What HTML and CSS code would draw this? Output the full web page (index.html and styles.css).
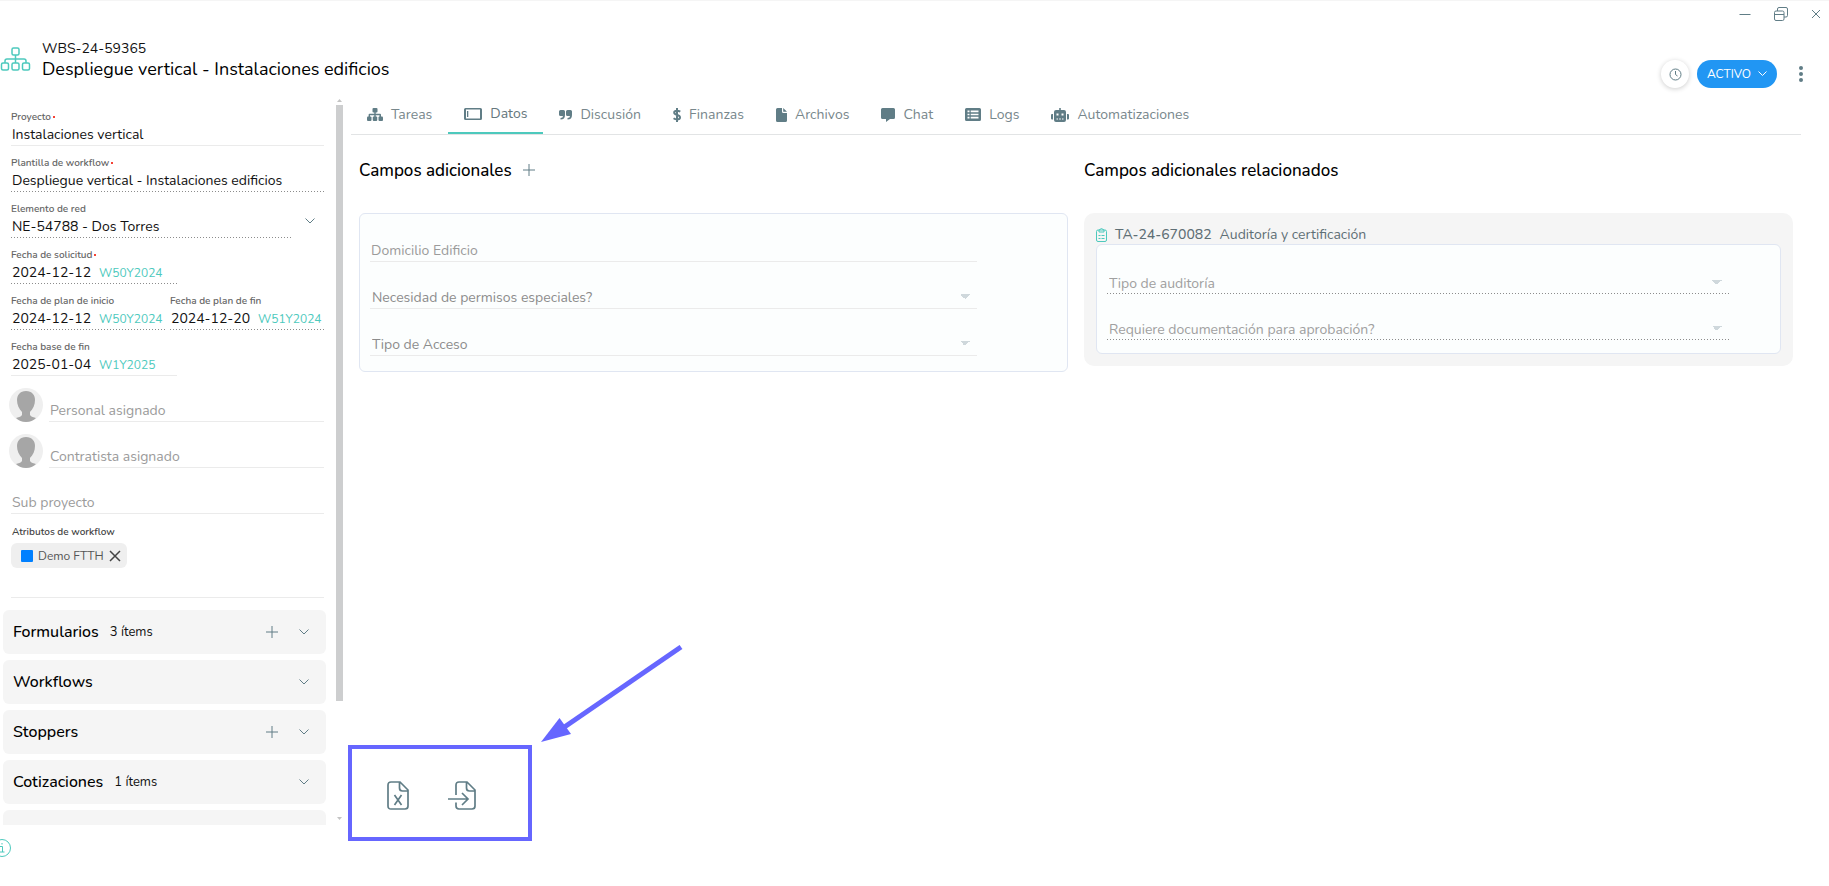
FILE: index.html
```
<!DOCTYPE html>
<html lang="es">
<head>
  <meta charset="UTF-8" />
  <meta name="viewport" content="width=device-width, initial-scale=1.0"/>
  <title>WBS-24-59365</title>
  <link rel="stylesheet" href="styles.css">
</head>
<body>

  <div class="window-bar">
    <button class="icon-btn" aria-label="Minimizar">
      <svg width="12" height="14" viewBox="0 0 12 14"><path d="M0.5 7.5h11"/></svg>
    </button>
    <button class="icon-btn" aria-label="Restaurar">
      <svg width="14" height="14" viewBox="0 0 14 14"><rect x="0.5" y="4" width="9.5" height="9.5" rx="1.5"/><path d="M0.5 7.500h9.500M3.500 4V2Q3.500.5 5 .5h7Q13.500.5 13.500 2v6.500Q13.500 10 12 10h-2"/></svg>
    </button>
    <button class="icon-btn" aria-label="Cerrar">
      <svg width="10" height="14" viewBox="0 0 10 14"><path d="M1 3l8 8M9 3l-8 8"/></svg>
    </button>
  </div>

  <header class="header">
    <svg class="header-icon" width="31" height="24" viewBox="0 0 31 24">
      <rect x="12" y="1" width="7" height="7" rx="1.500"/>
      <rect x="1.500" y="16" width="7" height="7" rx="1.500"/>
      <rect x="12" y="16" width="7" height="7" rx="1.500"/>
      <rect x="22.500" y="16" width="7" height="7" rx="1.500"/>
      <path d="M15.500 8v8M5 16v-2q0-2 2-2h17q2 0 2 2v2"/>
    </svg>
    <div class="header-text">
      <div class="code">WBS-24-59365</div>
      <h1>Despliegue vertical - Instalaciones edificios</h1>
    </div>
    <div class="header-actions">
      <button class="clock-btn" aria-label="Historial">
        <svg width="13" height="13" viewBox="0 0 13 13"><circle cx="6.500" cy="6.500" r="5.500"/><path d="M6.500 3v3.500l2 1.500"/></svg>
      </button>
      <button class="status-btn">ACTIVO
        <svg width="9" height="6" viewBox="0 0 9 6"><path d="M0.500 .5l4 4 4-4"/></svg>
      </button>
      <button class="dots-btn" aria-label="Más opciones">
        <svg width="4" height="16" viewBox="0 0 4 16"><circle cx="2" cy="2" r="2"/><circle cx="2" cy="8" r="2"/><circle cx="2" cy="14" r="2"/></svg>
      </button>
    </div>
  </header>

  <div class="layout">

    <aside class="sidebar">
      <div class="sidebar-content">
        <div class="fields">
          <div class="field">
            <label for="proyecto">Proyecto<i></i></label>
            <input id="proyecto" type="text" value="Instalaciones vertical">
          </div>
          <div class="field dotted">
            <label for="plantilla">Plantilla de workflow<i></i></label>
            <input id="plantilla" type="text" value="Despliegue vertical - Instalaciones edificios" readonly>
          </div>
          <div class="field-row">
            <div class="field dotted grow">
              <label for="elemento">Elemento de red</label>
              <input id="elemento" type="text" value="NE-54788 - Dos Torres" readonly>
            </div>
            <button class="icon-btn expand" aria-label="Desplegar elemento de red">
              <svg width="10" height="6" viewBox="0 0 10 6"><path d="M0.500 .5l4.500 4.500 4.500-4.500"/></svg>
            </button>
          </div>
          <div class="field dotted short">
            <label for="solicitud">Fecha de solicitud<i></i></label>
            <div class="date"><input id="solicitud" type="text" value="2024-12-12" readonly><span>W50Y2024</span></div>
          </div>
          <div class="field-row dates">
            <div class="field dotted grow">
              <label for="inicio">Fecha de plan de inicio</label>
              <div class="date"><input id="inicio" type="text" value="2024-12-12" readonly><span>W50Y2024</span></div>
            </div>
            <div class="field dotted grow">
              <label for="fin">Fecha de plan de fin</label>
              <div class="date"><input id="fin" type="text" value="2024-12-20" readonly><span>W51Y2024</span></div>
            </div>
          </div>
          <div class="field short">
            <label for="base">Fecha base de fin</label>
            <div class="date"><input id="base" type="text" value="2025-01-04"><span>W1Y2025</span></div>
          </div>
          <div class="person">
            <svg class="avatar" width="34" height="34" viewBox="0 0 34 34"><circle class="avatar-bg" cx="17" cy="17" r="17"/><path d="M17 3c6 0 9 4 9 9 0 5-2 9-5 12v3c1 2 4 2 6 3q-4 4-10 4t-10-4c2-1 5-1 6-3v-3c-3-3-5-7-5-12 0-5 3-9 9-9z"/></svg>
            <input type="text" aria-label="Personal asignado" placeholder="Personal asignado">
          </div>
          <div class="person">
            <svg class="avatar" width="34" height="34" viewBox="0 0 34 34"><circle class="avatar-bg" cx="17" cy="17" r="17"/><path d="M17 3c6 0 9 4 9 9 0 5-2 9-5 12v3c1 2 4 2 6 3q-4 4-10 4t-10-4c2-1 5-1 6-3v-3c-3-3-5-7-5-12 0-5 3-9 9-9z"/></svg>
            <input type="text" aria-label="Contratista asignado" placeholder="Contratista asignado">
          </div>
          <div class="person">
            <input type="text" aria-label="Sub proyecto" placeholder="Sub proyecto">
          </div>
          <div class="attributes">
            <div class="attributes-title">Atributos de workflow</div>
            <div class="chip">
              <span class="chip-color"></span>Demo FTTH
              <button class="chip-close" aria-label="Quitar Demo FTTH">
                <svg width="12" height="12" viewBox="0 0 12 12"><path d="M1 1l10 10M11 1L1 11"/></svg>
              </button>
            </div>
          </div>
        </div>

        <section class="panel">
          <h2>Formularios</h2><span>3 ítems</span>
          <button class="icon-btn" aria-label="Agregar formulario"><svg width="12" height="12" viewBox="0 0 12 12"><path d="M6 0v12M0 6h12"/></svg></button>
          <button class="icon-btn" aria-label="Abrir formularios"><svg width="10" height="6" viewBox="0 0 10 6"><path d="M0.500 .5l4.500 4.500 4.500-4.500"/></svg></button>
        </section>
        <section class="panel">
          <h2>Workflows</h2>
          <button class="icon-btn" aria-label="Abrir workflows"><svg width="10" height="6" viewBox="0 0 10 6"><path d="M0.500 .5l4.500 4.500 4.500-4.500"/></svg></button>
        </section>
        <section class="panel">
          <h2>Stoppers</h2>
          <button class="icon-btn" aria-label="Agregar stopper"><svg width="12" height="12" viewBox="0 0 12 12"><path d="M6 0v12M0 6h12"/></svg></button>
          <button class="icon-btn" aria-label="Abrir stoppers"><svg width="10" height="6" viewBox="0 0 10 6"><path d="M0.500 .5l4.500 4.500 4.500-4.500"/></svg></button>
        </section>
        <section class="panel">
          <h2>Cotizaciones</h2><span>1 ítems</span>
          <button class="icon-btn" aria-label="Abrir cotizaciones"><svg width="10" height="6" viewBox="0 0 10 6"><path d="M0.500 .5l4.500 4.500 4.500-4.500"/></svg></button>
        </section>
        <section class="panel"></section>
      </div>
      <div class="scrollbar">
        <svg width="5" height="3" viewBox="0 0 5 3"><path d="M2.500 0L5 3H0z"/></svg>
        <div class="scrollbar-track"><div class="scrollbar-thumb"></div></div>
        <svg width="5" height="3" viewBox="0 0 5 3"><path d="M0 0h5L2.500 3z"/></svg>
      </div>
    </aside>

    <main class="main">
      <nav class="tabs">
        <a href="#tareas" class="tab">
          <svg width="16" height="13" viewBox="0 0 16 13"><rect x="5.500" y="0" width="5" height="4.500" rx="1"/><rect x="0" y="8.500" width="4.500" height="4.500" rx="1"/><rect x="5.750" y="8.500" width="4.500" height="4.500" rx="1"/><rect x="11.500" y="8.500" width="4.500" height="4.500" rx="1"/><path d="M7.300 4h1.400v1.800H13q1 0 1 1V9h-1.500V7.200H8.700V9H7.300V7.200H3V9H1.600V6.800q0-1 1-1h4.700z"/></svg>
          Tareas
        </a>
        <a href="#datos" class="tab active">
          <svg width="18" height="12" viewBox="0 0 18 12"><path fill-rule="evenodd" d="M1.500 0h15Q18 0 18 1.500v9Q18 12 16.500 12h-15Q0 12 0 10.500v-9Q0 0 1.500 0zM2 1.500v9h14v-9zM3 3h1.300v6H3z"/></svg>
          Datos
        </a>
        <a href="#discusion" class="tab">
          <svg width="13" height="10" viewBox="0 0 13 10"><path d="M1.500 0h3Q6 0 6 1.500V5Q6 9.500 1.500 9.500V8Q4 8 4 6H1.500Q0 6 0 4.500v-3Q0 0 1.500 0zM8.500 0h3Q13 0 13 1.500V5q0 4.500-4.500 4.500V8Q11 8 11 6H8.500Q7 6 7 4.500v-3Q7 0 8.500 0z"/></svg>
          Discusión
        </a>
        <a href="#finanzas" class="tab">
          <svg class="line" width="8" height="14" viewBox="0 0 8 14"><path d="M4 0v14M7.300 3.600Q5.800 2.700 4 2.700 1.200 2.700 1.200 4.500 1.200 6.200 4 6.900 7 7.600 7 9.400 7 11.300 4 11.300 2 11.300.5 10.200"/></svg>
          Finanzas
        </a>
        <a href="#archivos" class="tab">
          <svg width="11" height="14" viewBox="0 0 11 14"><path d="M1.500 0H6v3.500Q6 5 7.500 5H11v7.500Q11 14 9.500 14h-8Q0 14 0 12.500v-11Q0 0 1.500 0zM7.200 0L11 3.800H7.200z"/></svg>
          Archivos
        </a>
        <a href="#chat" class="tab">
          <svg width="14" height="14" viewBox="0 0 14 14"><path d="M1.500 0h11Q14 0 14 1.500v8q0 1.500-1.500 1.500H9l-4 3v-3H1.500Q0 11 0 9.500v-8Q0 0 1.500 0z"/></svg>
          Chat
        </a>
        <a href="#logs" class="tab">
          <svg width="16" height="13" viewBox="0 0 16 13"><path fill-rule="evenodd" d="M1.500 0h13Q16 0 16 1.500v10q0 1.500-1.500 1.500h-13Q0 13 0 11.500v-10Q0 0 1.500 0zM2.500 2.600v1.600h2V2.600zm3.200 0v1.600h7.800V2.600zM2.500 5.700v1.600h2V5.700zm3.200 0v1.600h7.800V5.700zM2.500 8.800v1.600h2V8.800zm3.200 0v1.600h7.800V8.800z"/></svg>
          Logs
        </a>
        <a href="#automatizaciones" class="tab">
          <svg width="18" height="14" viewBox="0 0 18 14"><path fill-rule="evenodd" d="M8.200 0h1.600v2H13q2 0 2 2v8q0 2-2 2H5q-2 0-2-2V4q0-2 2-2h3.200zM5.500 5.500v2h2v-2zm5 0v2h2v-2zM5.500 10.500v1h1.500v-1zm2.700 0v1h1.600v-1zm2.800 0v1h1.500v-1zM0 7q0-1 1-1h1v5.500H1q-1 0-1-1zM16 6h1q1 0 1 1v3.500q0 1-1 1h-1z"/></svg>
          Automatizaciones
        </a>
      </nav>

      <div class="columns">
        <section class="column">
          <h2>Campos adicionales
            <button class="icon-btn" aria-label="Agregar campo"><svg width="12" height="12" viewBox="0 0 12 12"><path d="M6 0v12M0 6h12"/></svg></button>
          </h2>
          <div class="card">
            <input type="text" aria-label="Domicilio Edificio" placeholder="Domicilio Edificio">
            <select aria-label="Necesidad de permisos especiales?"><option>Necesidad de permisos especiales?</option></select>
            <select aria-label="Tipo de Acceso"><option>Tipo de Acceso</option></select>
          </div>
        </section>

        <section class="column">
          <h2>Campos adicionales relacionados</h2>
          <div class="related">
            <div class="related-title">
              <svg width="11" height="14" viewBox="0 0 11 14"><rect x="0.500" y="2" width="10" height="11.500" rx="1.500"/><path d="M3 4V2l2.500-1.500L8 2v2zM2.500 7.500h2M5.500 7.500h3M2.500 10.500h2M5.500 10.500h3"/></svg>
              <b>TA-24-670082</b>
              <span>Auditoría y certificación</span>
            </div>
            <div class="card locked">
              <select aria-label="Tipo de auditoría"><option>Tipo de auditoría</option></select>
              <select aria-label="Requiere documentación para aprobación?"><option>Requiere documentación para aprobación?</option></select>
            </div>
          </div>
        </section>
      </div>

      <div class="export-area">
        <!-- flecha que señala los botones -->
        <svg class="arrow" width="142" height="98" viewBox="0 0 142 98"><path class="arrow-line" d="M140 2L22 83"/><path class="arrow-head" d="M0 97L18.500 73 30 89z"/></svg>
        <div class="export-box">
          <button class="icon-btn" aria-label="Exportar a Excel">
            <svg width="22" height="29" viewBox="0 0 22 29"><path d="M4 1h9l8 8v16q0 3-3 3H4q-3 0-3-3V4q0-3 3-3zM12.500 1v6q0 3 3 3H21M7.500 14l7 10M14.500 14l-7 10"/></svg>
          </button>
          <button class="icon-btn" aria-label="Importar">
            <svg width="28" height="29" viewBox="0 0 28 29"><path d="M8 14V4q0-3 3-3h8l8 8v16q0 3-3 3H11q-3 0-3-3v-3.500M18.500 1v6q0 3 3 3H27M0 18h20M14 12l6 6-6 6"/></svg>
          </button>
        </div>
      </div>
    </main>
  </div>

  <footer>
    <button class="info-btn" aria-label="Información">
      <svg width="20" height="20" viewBox="0 0 20 20"><circle cx="10" cy="10" r="8.500"/><path d="M8 8.500h2.500V14M7.500 14h5M10 5v1.500"/></svg>
    </button>
  </footer>

</body>
</html>
```
FILE: styles.css
```
:root {
  --teal: #4dc9bd;
  --slate: #607d86;
  --line: #ebebeb;
  --dots: repeating-linear-gradient(to right, #8c8c8c 0 1px, transparent 1px 3px) bottom left / 100% 1px no-repeat;
  --mark: #6666ff;
}

* {
  box-sizing: border-box;
}

body {
  margin: 0;
  min-height: 100vh;
  display: flex;
  flex-direction: column;
  overflow: hidden;
  font-family: Nunito, Lato, sans-serif;
  font-size: 14px;
  color: #111;
  background-color: #fff;
  border-top: 1px solid #f5f5f5;
}

button, input, select {
  font: inherit;
  color: inherit;
  border: none;
  background: none;
  padding: 0;
  margin: 0;
  outline: none;
}

button {
  cursor: pointer;
}

svg {
  display: block;
  flex: none;
  fill: none;
  stroke: var(--slate);
}

h1, h2 {
  margin: 0;
  font-weight: 400;
}

.window-bar {
  display: flex;
  justify-content: flex-end;
  gap: 23px;
  height: 39px;
  padding: 6px 8px 0 0;
}

.window-bar .icon-btn {
  height: 14px;
}

.header {
  display: flex;
  height: 57px;
  padding-right: 26px;
}

.header-icon {
  margin-top: 7px;
  stroke: var(--teal);
  stroke-width: 1.5;
}

.header-text {
  margin-left: 11px;
}

.code {
  font-size: 14px;
  line-height: 18px;
}

.header h1 {
  font-size: 18px;
  line-height: 22px;
  color: #000;
}

.header-actions {
  display: flex;
  align-items: center;
  align-self: flex-start;
  margin: 20px 0 0 auto;
}

.clock-btn {
  display: grid;
  place-items: center;
  width: 28px;
  height: 28px;
  margin-right: 8px;
  border-radius: 50%;
  background-color: #fff;
  box-shadow: 0 1px 5px rgba(0, 0, 0, 0.2);
}

.status-btn {
  display: flex;
  align-items: center;
  justify-content: center;
  gap: 7px;
  width: 80px;
  height: 28px;
  margin-right: 22px;
  border-radius: 14px;
  font-size: 12px;
  color: #fff;
  background-color: #2196f3;
}

.status-btn svg {
  stroke: #fff;
}

.dots-btn svg {
  fill: var(--slate);
  stroke: none;
}

.layout {
  display: flex;
  height: 728px;
}

.sidebar {
  display: flex;
  flex: none;
  width: 351px;
}

.sidebar-content {
  width: 326px;
  padding-left: 3px;
  overflow: hidden;
}

.fields {
  margin: 3px 2px 12px 8px;
  border-bottom: 1px solid var(--line);
}

.field {
  height: 46px;
  padding-top: 10px;
  border-bottom: 1px solid var(--line);
}

.field.dotted {
  border-bottom: none;
  background: var(--dots);
}

.field label {
  display: flex;
  align-items: center;
  gap: 2px;
  font-size: 10px;
  font-weight: 600;
  line-height: 14px;
  color: #666;
}

.field label i {
  width: 2px;
  height: 2px;
  background-color: #f44336;
}

.field input {
  display: block;
  width: 100%;
  height: 21px;
  padding-left: 1px;
}

.field-row {
  display: flex;
}

.dates {
  gap: 5px;
}

.grow {
  flex: 1;
}

.short {
  width: 166px;
}

.date {
  display: flex;
  align-items: center;
}

.field .date input {
  flex: none;
  width: 88px;
}

.date span {
  font-size: 12px;
  color: var(--teal);
}

.expand {
  padding: 12px 9px 0 12px;
}

.person {
  display: flex;
  align-items: flex-end;
  height: 46px;
}

.avatar {
  margin: 0 6px 0 -2px;
  fill: #a6a6a6;
  stroke: none;
}

.avatar-bg {
  fill: #efefef;
}

.person input {
  flex: 1;
  height: 24px;
  padding: 2px 0 0 1px;
  border-bottom: 1px solid var(--line);
}

::placeholder {
  color: #9b9b9b;
  opacity: 1;
}

.attributes {
  height: 83px;
  padding-top: 11px;
}

.attributes-title {
  padding-left: 1px;
  font-size: 10px;
  font-weight: 600;
  line-height: 14px;
  color: #444;
}

.chip {
  display: inline-flex;
  align-items: center;
  gap: 5px;
  height: 25px;
  margin-top: 4px;
  padding: 0 6px 0 10px;
  border-radius: 6px;
  font-size: 12px;
  color: #555;
  background-color: #efefef;
}

.chip-color {
  width: 12px;
  height: 12px;
  border-radius: 1px;
  background-color: #0080ff;
}

.chip-close svg {
  stroke: #444;
  stroke-width: 1.5;
}

.panel {
  display: flex;
  align-items: center;
  height: 44px;
  margin-bottom: 6px;
  padding: 0 17px 0 10px;
  border-radius: 6px;
  background-color: #f5f5f5;
}

.panel h2 {
  font-size: 16px;
  font-weight: 500;
  color: #000;
}

.panel span {
  margin-left: 11px;
  font-size: 13px;
}

.panel .icon-btn {
  margin-left: 21px;
}

.panel h2 + .icon-btn, .panel span + .icon-btn {
  margin-left: auto;
}

.scrollbar {
  display: flex;
  flex-direction: column;
  align-items: center;
  justify-content: space-between;
  width: 7px;
  margin: 2px 0 5px 10px;
}

.scrollbar svg {
  fill: #c4c4c4;
  stroke: none;
}

.scrollbar-track {
  flex: 1;
  align-self: stretch;
  padding: 3px 0;
}

.scrollbar-thumb {
  height: 84%;
  background-color: #cdcecf;
}

.main {
  flex: 1;
  display: flex;
  flex-direction: column;
  margin-right: 28px;
}

.tabs {
  display: flex;
  height: 38px;
  border-bottom: 1px solid #e2e4e5;
}

.tab {
  display: flex;
  align-items: center;
  gap: 8px;
  padding: 0 16px 2px;
  color: #78878c;
  text-decoration: none;
}

.tab svg {
  fill: var(--slate);
  stroke: none;
}

.tab svg.line {
  fill: none;
  stroke: var(--slate);
  stroke-width: 2;
}

.tab.active {
  color: #66777d;
  border-bottom: 2px solid var(--teal);
}

.columns {
  display: flex;
  gap: 16px;
  padding: 23px 8px 0;
}

.column {
  flex: 1;
}

.column h2 {
  display: flex;
  align-items: center;
  gap: 11px;
  height: 24px;
  margin-bottom: 31px;
  font-size: 17px;
  font-weight: 500;
  color: #000;
}

.card {
  display: flex;
  flex-direction: column;
  gap: 23px;
  padding: 24px 90px 15px 10px;
  border: 1px solid #e0e6f2;
  border-radius: 6px;
  background-color: #fcfefe;
}

.card input, .card select {
  width: 100%;
  height: 24px;
  padding: 2px 0 0 1px;
  color: #8c8c8c;
  border-bottom: 1px solid var(--line);
}

.card select {
  padding-left: 2px;
  appearance: none;
  background: linear-gradient(to bottom right, #cfd8dc 50%, transparent 50%) right 7px center / 5px 5px no-repeat, linear-gradient(to bottom left, #cfd8dc 50%, transparent 50%) right 12px center / 5px 5px no-repeat;
}

.related {
  padding: 12px;
  border-radius: 10px;
  background-color: #f5f5f5;
}

.related-title {
  display: flex;
  align-items: center;
  gap: 8px;
  height: 19px;
  color: #5f6f75;
}

.related-title b {
  font-weight: 500;
}

.related-title svg {
  stroke: var(--teal);
}

.card.locked {
  gap: 22px;
  padding: 25px 51px 13px 10px;
}

.card.locked select {
  color: #a0a0a0;
  border-bottom: none;
  background: linear-gradient(to bottom right, #cfd8dc 50%, transparent 50%) right 7px center / 5px 5px no-repeat, linear-gradient(to bottom left, #cfd8dc 50%, transparent 50%) right 12px center / 5px 5px no-repeat, var(--dots);
}

.export-area {
  position: relative;
  width: 184px;
  margin: auto 0 -16px -3px;
}

.export-box {
  display: flex;
  align-items: center;
  gap: 39px;
  height: 96px;
  padding: 4px 0 0 35px;
  border: 4px solid var(--mark);
}

.export-box svg {
  stroke-width: 1.7;
}

.arrow {
  position: absolute;
  left: 193px;
  bottom: 98px;
}

.arrow-line {
  stroke: var(--mark);
  stroke-width: 5;
}

.arrow-head {
  fill: var(--mark);
  stroke: none;
}

footer {
  display: flex;
  padding-top: 13px;
}

.info-btn {
  margin-left: -8px;
}

.info-btn svg {
  stroke: var(--teal);
}
```
